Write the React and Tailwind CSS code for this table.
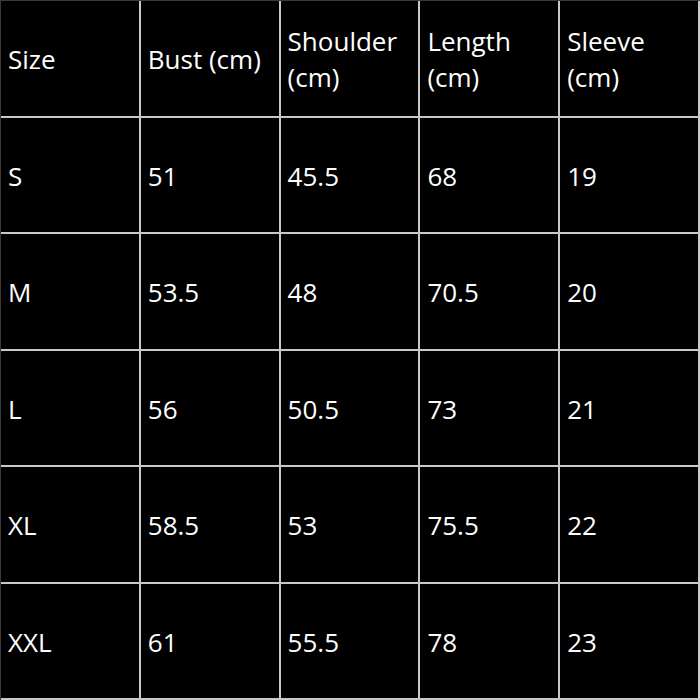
import React from "react";

const header = ["Size", "Bust (cm)", "Shoulder (cm)", "Length (cm)", "Sleeve (cm)"];
const rows = [
  ["S", "51", "45.5", "68", "19"],
  ["M", "53.5", "48", "70.5", "20"],
  ["L", "56", "50.5", "73", "21"],
  ["XL", "58.5", "53", "75.5", "22"],
  ["XXL", "61", "55.5", "78", "23"],
];

export default function App() {
  const cells = [header, ...rows];
  return (
    <div className="w-[700px] h-[700px] bg-black">
      <div
        className="w-[700px] h-[700px] grid grid-cols-5 grid-rows-6 border-t border-l border-[#3a3a3a] text-white text-[26px] leading-[36px]"
        style={{ fontFamily: '"Open Sans", "Noto Sans", sans-serif' }}
      >
        {cells.flatMap((r, i) =>
          r.map((c, j) => (
            <div
              key={`${i}-${j}`}
              className="flex items-center pl-[7px] pr-[2px] pt-[2px] border-r-2 border-b-2 border-[#c9c9c9] overflow-hidden"
            >
              <span>{c}</span>
            </div>
          ))
        )}
      </div>
    </div>
  );
}
